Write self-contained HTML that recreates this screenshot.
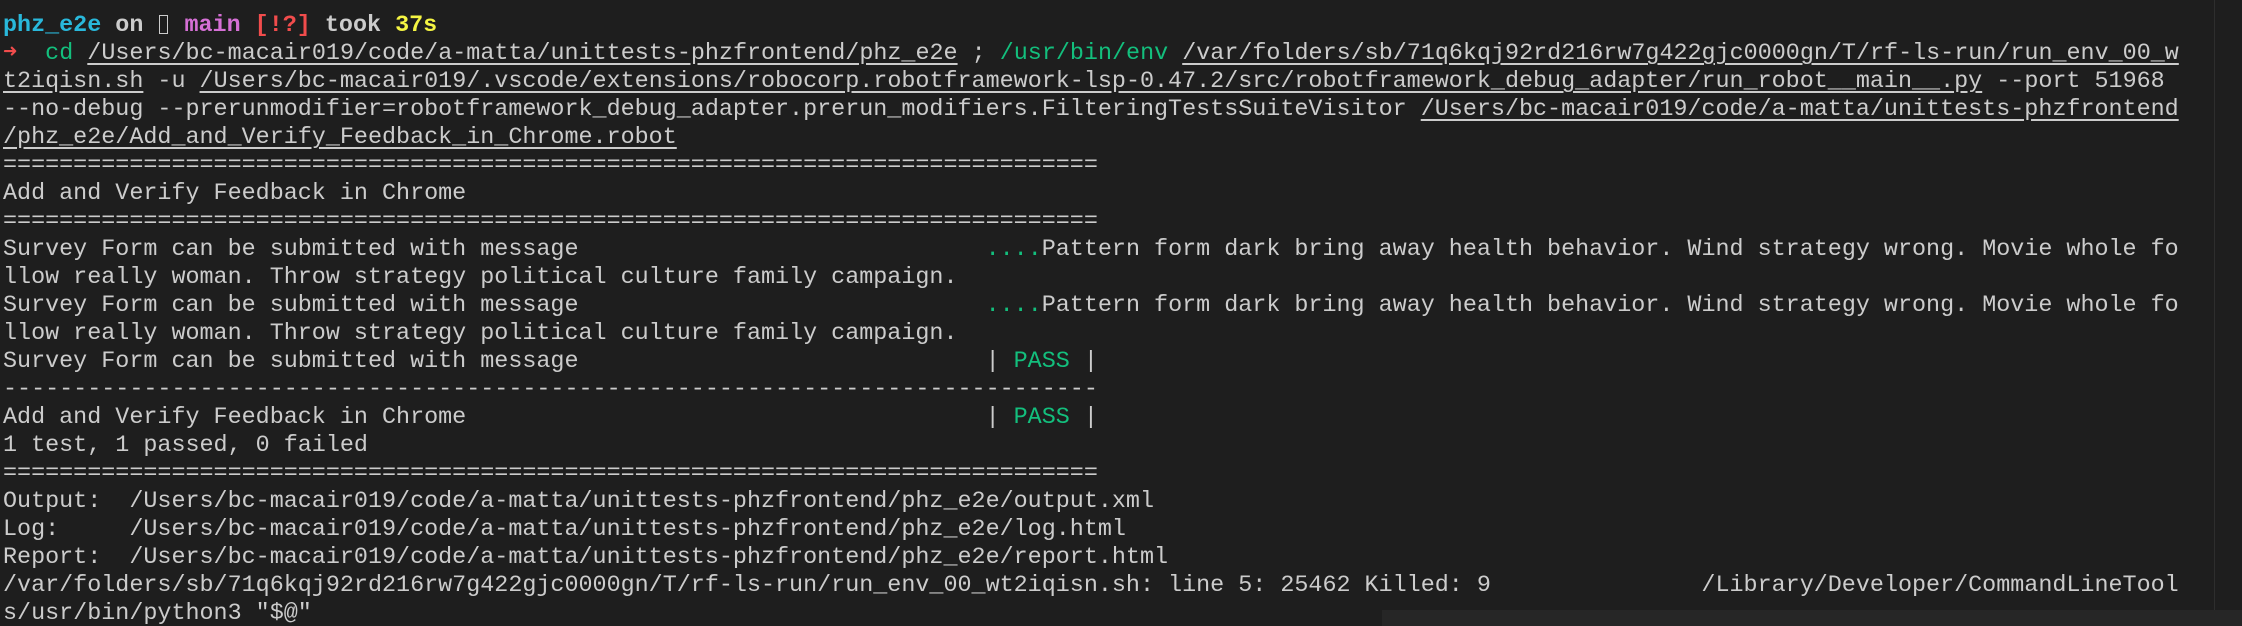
<!DOCTYPE html>
<html><head><meta charset="utf-8"><style>
html,body{margin:0;padding:0;background:#1e1e1e;width:2242px;height:626px;overflow:hidden;position:relative}
pre{margin:0;position:absolute;left:3px;top:12px;font-family:"Liberation Mono","DejaVu Sans Mono",monospace;font-size:23.4px;line-height:28px;color:#cccccc;white-space:pre}
.u{text-decoration:underline;text-underline-offset:4px}
.g{color:#13bf7d}.c{color:#29b8db}.m{color:#d670d6}.r{color:#f14c4c}.y{color:#f5f543}.b{font-weight:bold}
.box{display:inline-block;width:9px;height:19px;border:1.5px solid #cccccc;vertical-align:-3px;margin:0 2px 0 2px;box-sizing:border-box}
.band{position:absolute;left:1382px;top:610px;width:860px;height:16px;background:#262626}
.vl{position:absolute;left:2214px;top:0;width:1px;height:610px;background:#2e2e2e}
</style></head><body>
<div class="vl"></div><div class="band"></div>
<pre><span class="b"><span class="c">phz_e2e</span> on <span class="box"></span> <span class="m">main</span> <span class="r">[!?]</span> took <span class="y">37s</span></span>
<span class="r">➜</span>  <span class="g">cd</span> <span class="u">/Users/bc-macair019/code/a-matta/unittests-phzfrontend/phz_e2e</span> ; <span class="g">/usr/bin/env</span> <span class="u">/var/folders/sb/71q6kqj92rd216rw7g422gjc0000gn/T/rf-ls-run/run_env_00_w</span>
<span class="u">t2iqisn.sh</span> -u <span class="u">/Users/bc-macair019/.vscode/extensions/robocorp.robotframework-lsp-0.47.2/src/robotframework_debug_adapter/run_robot__main__.py</span> --port 51968
--no-debug --prerunmodifier=robotframework_debug_adapter.prerun_modifiers.FilteringTestsSuiteVisitor <span class="u">/Users/bc-macair019/code/a-matta/unittests-phzfrontend</span>
<span class="u">/phz_e2e/Add_and_Verify_Feedback_in_Chrome.robot</span>
==============================================================================
Add and Verify Feedback in Chrome
==============================================================================
Survey Form can be submitted with message                             <span class="g">....</span>Pattern form dark bring away health behavior. Wind strategy wrong. Movie whole fo
llow really woman. Throw strategy political culture family campaign.
Survey Form can be submitted with message                             <span class="g">....</span>Pattern form dark bring away health behavior. Wind strategy wrong. Movie whole fo
llow really woman. Throw strategy political culture family campaign.
Survey Form can be submitted with message                             | <span class="g">PASS</span> |
------------------------------------------------------------------------------
Add and Verify Feedback in Chrome                                     | <span class="g">PASS</span> |
1 test, 1 passed, 0 failed
==============================================================================
Output:  /Users/bc-macair019/code/a-matta/unittests-phzfrontend/phz_e2e/output.xml
Log:     /Users/bc-macair019/code/a-matta/unittests-phzfrontend/phz_e2e/log.html
Report:  /Users/bc-macair019/code/a-matta/unittests-phzfrontend/phz_e2e/report.html
/var/folders/sb/71q6kqj92rd216rw7g422gjc0000gn/T/rf-ls-run/run_env_00_wt2iqisn.sh: line 5: 25462 Killed: 9               /Library/Developer/CommandLineTool
s/usr/bin/python3 "$@"</pre>
</body></html>
